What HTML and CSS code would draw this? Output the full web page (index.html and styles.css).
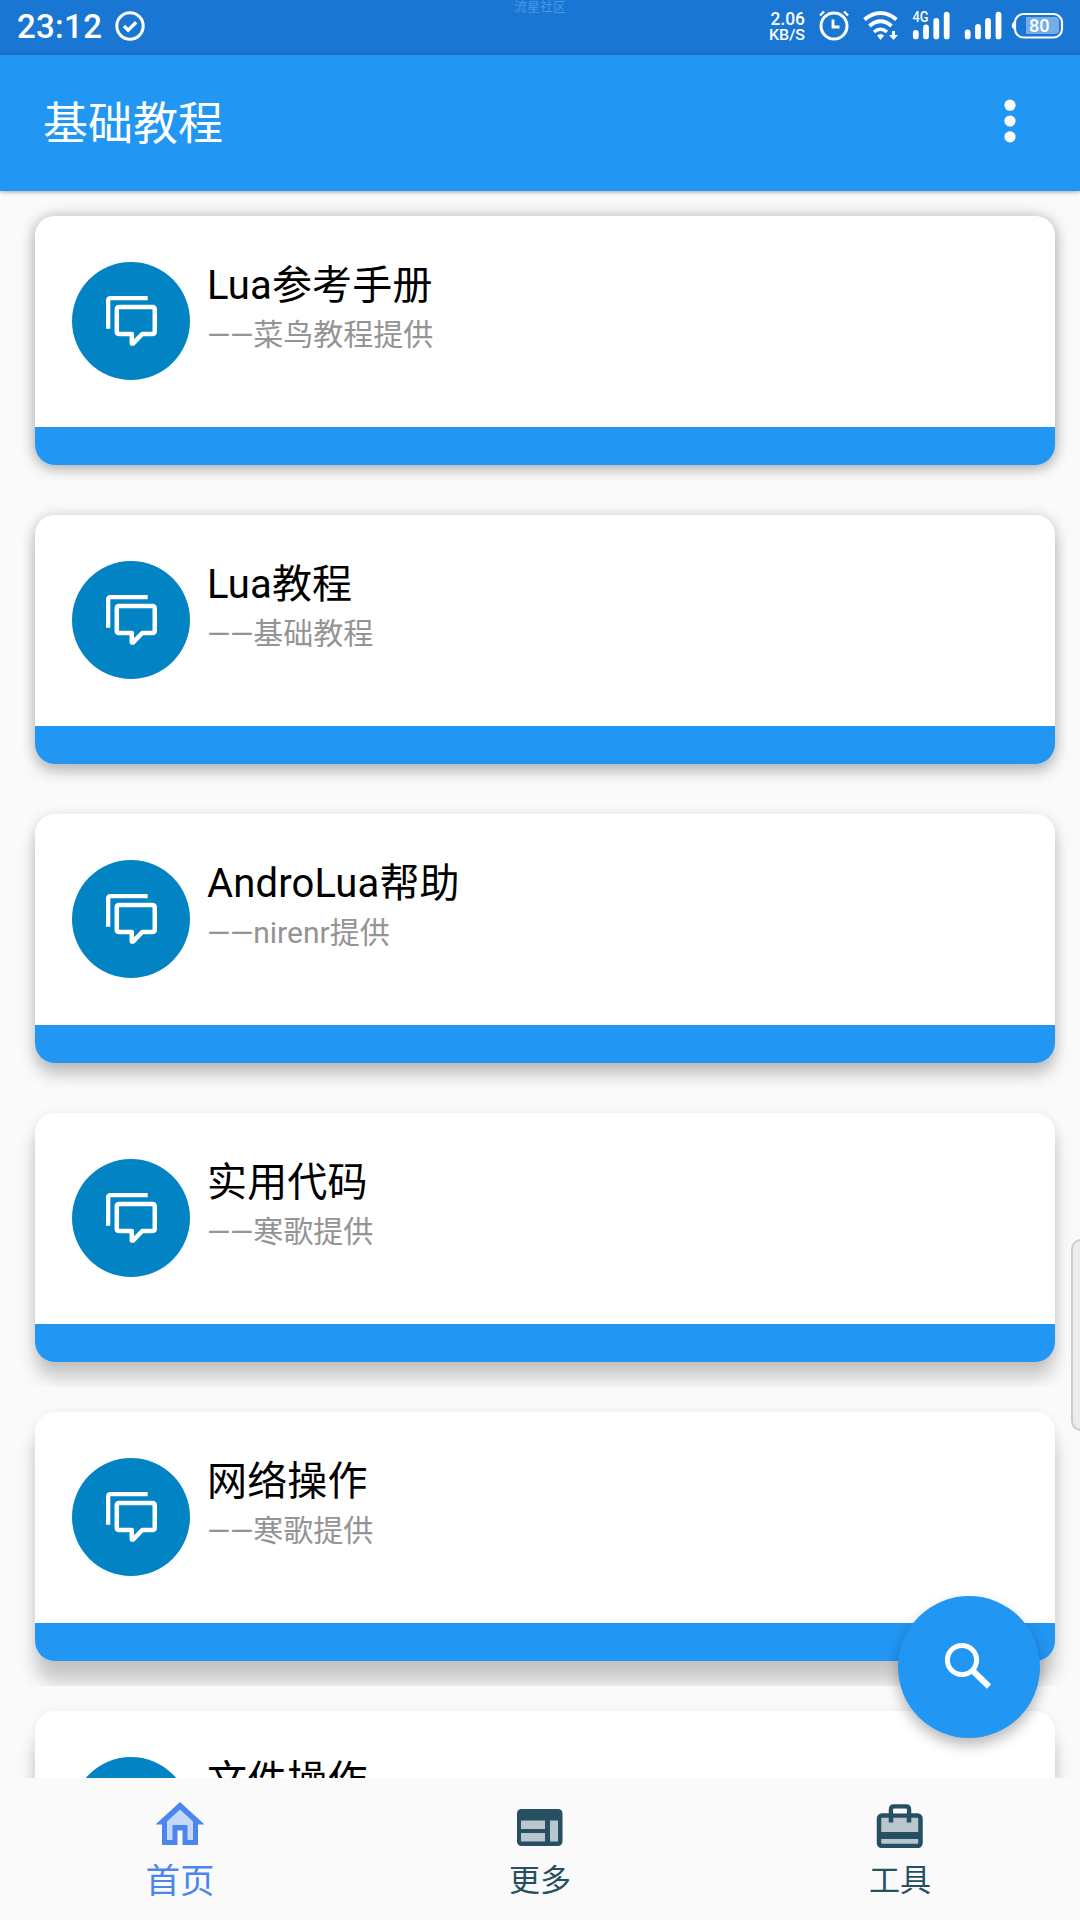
FILE: index.html
```html
<!DOCTYPE html>
<html lang="zh-CN">
<head>
<meta charset="utf-8">
<title>基础教程</title>
<link rel="stylesheet" href="styles.css">
</head>
<body>
<svg class="defs" width="0" height="0">
  <symbol id="chat" viewBox="0 0 52 52">
    <path d="M2.200 33.500V4.700Q2.200 2.200 4.700 2.200H42.500" fill="none" stroke="#fff" stroke-width="4.400"/>
    <path d="M13.500 11.200H47.200Q49.700 11.200 49.700 13.700V36.200Q49.700 38.700 47.200 38.700H37L27.500 48.500H26.300V38.700H13.500Q11 38.700 11 36.200V13.700Q11 11.200 13.500 11.200Z" fill="none" stroke="#fff" stroke-width="4.600" stroke-linejoin="round"/>
  </symbol>
</svg>
<div class="screen">
  <header class="status">
    <div class="status-left">
      <span class="clock">23:12</span>
      <svg width="30" height="30" viewBox="0 0 30 30" fill="none" stroke="#fff"><circle cx="15" cy="15" r="13.200" stroke-width="3"/><path d="M9 15l4.200 4.200 8-8" stroke-width="3.400"/></svg>
    </div>
    <span class="watermark">流星社区</span>
    <svg class="status-icons" width="320" height="55" viewBox="760 0 320 55" fill="none" stroke="#fff">
      <g class="speed" fill="#fff" stroke="none">
        <text x="770.500" y="25" font-size="18.500" textLength="34.500" lengthAdjust="spacingAndGlyphs">2.06</text>
        <text x="769" y="39.500" font-size="15.500" textLength="36" lengthAdjust="spacingAndGlyphs">KB/S</text>
      </g>
      <circle cx="834" cy="26" r="13" stroke-width="3"/>
      <path d="M833 19.500v7.500h6.500" stroke-width="2.800"/>
      <path d="M820 15.500l4-4M848 15.500l-4-4" stroke-width="2.400"/>
      <path d="M864.500 19.500Q880.500 6.500 896.500 19.500" stroke-width="4"/>
      <path d="M869.500 26Q880.500 16.500 891.500 26" stroke-width="4"/>
      <path d="M874 32Q880.500 26.500 887 32" stroke-width="3.600"/>
      <path d="M877 35.500Q880.500 32.500 884 35.500L880.500 40Z" fill="#fff" stroke="none"/>
      <path d="M892 31h3v4h3l-4.500 5-4.500-5h3z" fill="#fff" stroke="none"/>
      <g stroke-width="5.800" stroke-linecap="round">
        <path d="M915.800 32.800v3.600M926 27.500v8.900M936.300 21v15.400M946.700 14.700v21.700"/>
        <path d="M967.700 32.500v3.900M978 27v9.400M988 21v15.400M998.500 14.700v21.700"/>
      </g>
      <text class="network" x="912.500" y="22" font-size="14" textLength="16" lengthAdjust="spacingAndGlyphs">4G</text>
      <rect x="1015" y="14" width="47" height="23.500" rx="8.500" stroke-width="2.200"/>
      <path d="M1015 20.500Q1008.500 25.500 1015 30.500Z" fill="#fff" stroke="none"/>
      <path d="M1026 17H1055Q1059 17 1059 21V30Q1059 34 1055 34H1026Z" fill="#75ade8" stroke="none"/>
      <text class="charge" x="1029" y="32" font-size="18.500" textLength="20.500" lengthAdjust="spacingAndGlyphs">80</text>
    </svg>
  </header>
  <div class="toolbar">
    <h1>基础教程</h1>
    <svg width="12" height="44" viewBox="0 0 12 44" fill="#fff"><circle cx="6" cy="6.200" r="5.600"/><circle cx="6" cy="22" r="5.600"/><circle cx="6" cy="37.800" r="5.600"/></svg>
  </div>
  <main class="list">
    <section class="item"><article class="card"><div class="card-body"><span class="avatar"><svg width="51" height="51"><use href="#chat"/></svg></span><div class="text"><h2>Lua参考手册</h2><p><span class="dash">——</span>菜鸟教程提供</p></div></div></article></section>
    <section class="item"><article class="card"><div class="card-body"><span class="avatar"><svg width="51" height="51"><use href="#chat"/></svg></span><div class="text"><h2>Lua教程</h2><p><span class="dash">——</span>基础教程</p></div></div></article></section>
    <section class="item"><article class="card"><div class="card-body"><span class="avatar"><svg width="51" height="51"><use href="#chat"/></svg></span><div class="text"><h2>AndroLua帮助</h2><p><span class="dash">——</span>nirenr提供</p></div></div></article></section>
    <section class="item"><article class="card"><div class="card-body"><span class="avatar"><svg width="51" height="51"><use href="#chat"/></svg></span><div class="text"><h2>实用代码</h2><p><span class="dash">——</span>寒歌提供</p></div></div></article></section>
    <section class="item"><article class="card"><div class="card-body"><span class="avatar"><svg width="51" height="51"><use href="#chat"/></svg></span><div class="text"><h2>网络操作</h2><p><span class="dash">——</span>寒歌提供</p></div></div></article></section>
    <section class="item"><article class="card"><div class="card-body"><span class="avatar"></span><div class="text"><h2>文件操作</h2></div></div></article></section>
  </main>
  <nav class="tabs">
    <a class="tab active">
      <svg width="50" height="48" viewBox="0 0 50 48"><path d="M25 2L49.500 24.500H43V45H27.500V30.500H22.500V45H7V24.500H.5Z" fill="#4a86ee"/><path d="M25 9.500L38 21.500V40H32.500V25H17.500V40H12V21.500Z" fill="#c4d8f8"/></svg>
      <span>首页</span>
    </a>
    <a class="tab">
      <svg width="50" height="48" viewBox="0 0 50 48"><rect x="2" y="9" width="45.500" height="37" rx="4.500" fill="#264f62"/><path d="M6 20.500H30V29H6ZM6 33H30V41.500H6ZM35 20.500H43V41.500H35Z" fill="#b9c6cd"/></svg>
      <span>更多</span>
    </a>
    <a class="tab">
      <svg width="50" height="48" viewBox="0 0 50 48"><rect x="4" y="15.500" width="41.500" height="30.500" rx="3" fill="#b9c6cd" stroke="#264f62" stroke-width="4.500"/><path d="M4 35.500H45" stroke="#264f62" stroke-width="7"/><path d="M16 22.500V9.500Q16 6.500 19 6.500H31Q34 6.500 34 9.500V22.500" fill="none" stroke="#264f62" stroke-width="4.500"/><path d="M18.300 8.700H31.700V13.300H18.300Z" fill="#fafafa"/></svg>
      <span>工具</span>
    </a>
  </nav>
  <button class="fab" aria-label="搜索"><svg width="50" height="50" viewBox="0 0 50 50" fill="none" stroke="#fff"><circle cx="19" cy="19" r="14.600" stroke-width="5"/><path d="M30.500 30.500L46 45.500" stroke-width="6"/></svg></button>
  <div class="edge-handle"></div>
</div>
</body>
</html>
```
FILE: styles.css
```css
* { box-sizing: border-box; }
body {
  margin: 0;
  background: #fafafa;
  font-family: Roboto, "Noto Sans CJK SC", sans-serif;
}
.defs { display: block; }
h1, h2, p { margin: 0; font-weight: 400; }

.screen {
  position: relative;
  width: 1080px;
  height: 1920px;
  display: flex;
  flex-direction: column;
  overflow: hidden;
}

.status {
  position: relative;
  flex: 0 0 55px;
  background: #1976d2;
  color: #fff;
  display: flex;
  justify-content: space-between;
}
.status-left {
  display: flex;
  align-items: center;
  gap: 13px;
  height: 52px;
  padding-left: 17px;
}
.clock {
  font-size: 33px;
  font-weight: 500;
  line-height: 52px;
  letter-spacing: 0.3px;
  padding-top: 1px;
}
.watermark {
  position: absolute;
  top: 0;
  left: 0;
  width: 1080px;
  text-align: center;
  font-size: 13px;
  line-height: 13px;
  color: #4a98e6;
}
.speed { font-weight: 500; }
.network, .charge { fill: #fff; stroke: none; font-weight: 500; }

.toolbar {
  position: relative;
  z-index: 1;
  flex: 0 0 136px;
  display: flex;
  align-items: center;
  justify-content: space-between;
  padding: 0 64px 5px 43px;
  background: #2196f3;
  color: #fff;
  box-shadow: 0 1px 4px rgba(0, 0, 0, 0.35);
}
.toolbar h1 { font-size: 45px; line-height: 60px; padding-top: 8px; }

.list { flex: 1; min-height: 0; overflow: hidden; }
.item {
  height: 299px;
  padding: 25px;
  padding-left: 35px;
  overflow: hidden;
}
.card {
  height: 249px;
  border-radius: 20px;
  background: linear-gradient(#fff 211px, #2196f3 211px);
  box-shadow: 0 4px 14px rgba(0, 0, 0, 0.22), 0 0 16px rgba(0, 0, 0, 0.18);
}
.item:nth-child(2) .card { box-shadow: 0 8px 15px rgba(0, 0, 0, 0.22), 0 0 14px rgba(0, 0, 0, 0.14); }
.item:nth-child(3) .card { box-shadow: 0 12px 16px rgba(0, 0, 0, 0.21), 0 1px 13px rgba(0, 0, 0, 0.1); }
.item:nth-child(4) .card { box-shadow: 0 16px 17px rgba(0, 0, 0, 0.2), 0 1px 12px rgba(0, 0, 0, 0.08); }
.item:nth-child(5) .card { box-shadow: 0 21px 18px rgba(0, 0, 0, 0.2), 0 1px 11px rgba(0, 0, 0, 0.06); }
.item:nth-child(6) .card { box-shadow: 0 24px 18px rgba(0, 0, 0, 0.2), 0 1px 11px rgba(0, 0, 0, 0.06); }
.card-body { display: flex; gap: 17px; padding: 46px 37px; }
.avatar {
  flex: 0 0 118px;
  height: 118px;
  padding: 1px 0 0 1px;
  border-radius: 50%;
  background: #0284c4;
  display: grid;
  place-items: center;
}
.avatar svg { display: block; }
.text { padding-top: 1px; }
.text h2 { font-size: 40px; letter-spacing: 0.15px; line-height: 46px; color: #000; }
.text p { font-size: 30px; line-height: 36px; margin-top: 8px; color: #949494; }
.dash { letter-spacing: -0.3px; }

.tabs {
  position: relative;
  flex: 0 0 142px;
  display: grid;
  grid-template-columns: repeat(3, 1fr);
  background: #fafafa;
}
.tab {
  display: flex;
  flex-direction: column;
  align-items: center;
  padding-top: 22px;
  color: #264f62;
  font-size: 31px;
}
.tab span { line-height: 40px; margin-top: 13px; }
.tab.active { color: #4a86ee; font-size: 34.5px; }

.fab {
  position: absolute;
  left: 898px;
  top: 1596px;
  width: 142px;
  height: 142px;
  padding: 0 2px 3px 0;
  border: 0;
  border-radius: 50%;
  background: #2196f3;
  display: grid;
  place-items: center;
  box-shadow: 0 7px 14px rgba(0, 0, 0, 0.28);
}
.edge-handle {
  position: absolute;
  left: 1071px;
  top: 1239px;
  width: 20px;
  height: 192px;
  border: 2px solid #cdcdcd;
  border-radius: 10px;
  background: #ececec;
}
```
